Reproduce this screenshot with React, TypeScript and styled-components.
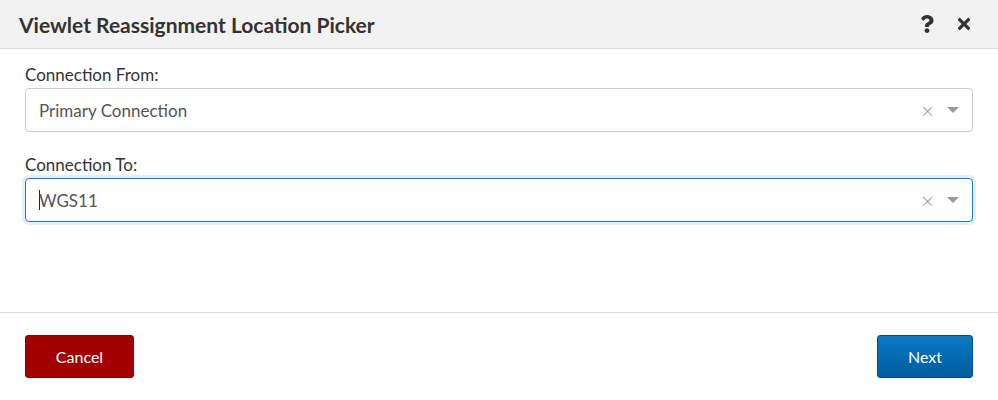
import React, { useState } from "react";
import styled, { createGlobalStyle, css } from "styled-components";
import { FaQuestion, FaTimes } from "react-icons/fa";

const GlobalStyle = createGlobalStyle`
  html, body {
    margin: 0;
    padding: 0;
    background: #fff;
  }
  body {
    font-family: Lato, "Open Sans", "Liberation Sans", sans-serif;
  }
`;

const Dialog = styled.div`
  width: 998px;
  height: 400px;
  display: flex;
  flex-direction: column;
  background: #fff;
  box-sizing: border-box;
`;

const Header = styled.div`
  height: 48px;
  flex: none;
  display: flex;
  align-items: center;
  padding: 0 25px 0 19px;
  background: #f2f2f2;
  border-bottom: 1px solid #dcdcdc;
`;

const Title = styled.h1`
  flex: 1;
  margin: 0;
  font-size: 21px;
  font-weight: 700;
  color: #333;
`;

const HeaderIcons = styled.div`
  display: flex;
  align-items: center;
  gap: 19px;
  color: #333;
`;

const Body = styled.div`
  flex: 1;
  padding: 16px 25px 0;
  display: flex;
  flex-direction: column;
  border-bottom: 1px solid #dcdcdc;
`;

const Field = styled.div`
  display: flex;
  flex-direction: column;
  gap: 3px;
  margin-bottom: 23px;
`;

const Label = styled.label`
  font-size: 17px;
  color: #333;
  line-height: 20px;
`;

const SelectBox = styled.div<{ $focused?: boolean }>`
  height: 44px;
  box-sizing: border-box;
  display: flex;
  align-items: center;
  padding: 0 13px;
  border: 1px solid #ccc;
  border-radius: 4px;
  background: #fff;
  ${(p) =>
    p.$focused &&
    css`
      border-color: #1f7ae0;
      box-shadow: 0 0 0 3px #e3f0fd;
    `}
`;

const Value = styled.span`
  flex: 1;
  font-size: 17px;
  color: #555;
  display: flex;
  align-items: center;
`;

const Caret = styled.span`
  width: 1px;
  height: 20px;
  background: #222;
  margin-right: -1px;
`;

const Clear = styled.span`
  font-size: 18px;
  color: #999;
  margin-right: 12px;
  font-family: "DejaVu Sans", sans-serif;
  font-weight: 300;
`;

const Arrow = styled.span`
  width: 0;
  height: 0;
  border-left: 6px solid transparent;
  border-right: 6px solid transparent;
  border-top: 6px solid #999;
`;

const Footer = styled.div`
  height: 87px;
  flex: none;
  display: flex;
  align-items: center;
  justify-content: space-between;
  padding: 0 25px;
`;

const Button = styled.button<{ $variant: "cancel" | "primary" }>`
  height: 43px;
  border-radius: 3px;
  font-family: inherit;
  font-size: 16px;
  color: #fff;
  cursor: pointer;
  ${(p) =>
    p.$variant === "cancel"
      ? css`
          width: 109px;
          background: #a30000;
          border: 1px solid #8a0000;
        `
      : css`
          width: 96px;
          background: linear-gradient(#0a7ac4, #005c9f);
          border: 1px solid #00508c;
        `}
`;

function Select({ value, focused }: { value: string; focused?: boolean }) {
  return (
    <SelectBox $focused={focused}>
      <Value>
        {focused && <Caret />}
        {value}
      </Value>
      <Clear>×</Clear>
      <Arrow />
    </SelectBox>
  );
}

export default function App() {
  const [from] = useState("Primary Connection");
  const [to] = useState("WGS11");

  return (
    <>
      <GlobalStyle />
      <Dialog>
        <Header>
          <Title>Viewlet Reassignment Location Picker</Title>
          <HeaderIcons>
            <FaQuestion size={18} />
            <FaTimes size={18} />
          </HeaderIcons>
        </Header>
        <Body>
          <Field>
            <Label>Connection From:</Label>
            <Select value={from} />
          </Field>
          <Field>
            <Label>Connection To:</Label>
            <Select value={to} focused />
          </Field>
        </Body>
        <Footer>
          <Button $variant="cancel">Cancel</Button>
          <Button $variant="primary">Next</Button>
        </Footer>
      </Dialog>
    </>
  );
}
